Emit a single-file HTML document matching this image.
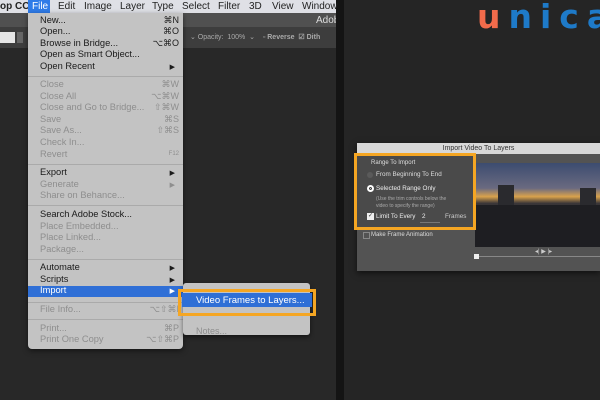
<!DOCTYPE html>
<html><head><meta charset="utf-8"><style>
*{margin:0;padding:0;box-sizing:border-box}
body{width:600px;height:400px;overflow:hidden;background:#252525;position:relative;font-family:"Liberation Sans",sans-serif}
.a{position:absolute}
.mb{left:0;top:0;width:336px;height:13px;background:#dfe0e6;font-size:10px;color:#222;white-space:nowrap}
.mb span{position:absolute;top:1px}
.menu{left:28px;top:13px;width:155px;height:336px;background:#c3c3c3;border-radius:0 0 4px 4px;box-shadow:0 2px 6px rgba(0,0,0,.5)}
.it{position:absolute;left:12px;font-size:9.3px;color:#1a1a1a;white-space:nowrap}
.d{color:#8e8e8e}
.sc{position:absolute;right:4px;font-size:9px;color:#1a1a1a}
.sc.d{color:#8e8e8e}
.sep{position:absolute;left:0;width:155px;height:1px;background:#aaa}
.ar{position:absolute;right:8px;font-size:7px;color:#1a1a1a}
</style></head><body>
<div class="a" style="left:0;top:13px;width:336px;height:14px;background:#505050"></div>
<div class="a" style="left:316px;top:15px;color:#ddd;font-size:10px">Adob</div>
<div class="a" style="left:0;top:27px;width:336px;height:21px;background:#3d3d3d"></div>
<div class="a" style="left:0;top:32px;width:15px;height:11px;background:#e6e6e6"></div>
<div class="a" style="left:17px;top:32px;width:6px;height:11px;background:#666"></div>
<div class="a" style="left:190px;top:33px;font-size:7px;color:#aaa;white-space:nowrap">⌄ Opacity:&nbsp; 100% &nbsp;⌄ &nbsp;&nbsp;&nbsp;▫ <b>Reverse</b> &nbsp;<b>☑ Dith</b></div>
<div class="a" style="left:0;top:48px;width:336px;height:352px;background:#282828"></div>
<div class="a" style="left:336px;top:0;width:8px;height:400px;background:#141414"></div>
<div class="a mb">
<span style="left:0;font-weight:bold">op CC</span>
<span style="left:28px;top:0;width:22px;height:13px;background:#2f7be8;color:#fff;padding:1px 0 0 4px">File</span>
<span style="left:58px">Edit</span><span style="left:84px">Image</span><span style="left:120px">Layer</span><span style="left:152px">Type</span><span style="left:182px">Select</span><span style="left:218px">Filter</span><span style="left:249px">3D</span><span style="left:272px">View</span><span style="left:302px">Window</span>
</div>
<div class="a menu">
<div class="it" style="top:2px">New...</div><div class="sc" style="top:2px">⌘N</div>
<div class="it" style="top:13px">Open...</div><div class="sc" style="top:13px">⌘O</div>
<div class="it" style="top:25px">Browse in Bridge...</div><div class="sc" style="top:25px">⌥⌘O</div>
<div class="it" style="top:36px">Open as Smart Object...</div>
<div class="it" style="top:48px">Open Recent</div><div class="ar" style="top:50px">▶</div>
<div class="sep" style="top:63px"></div>
<div class="it d" style="top:66px">Close</div><div class="sc d" style="top:66px">⌘W</div>
<div class="it d" style="top:78px">Close All</div><div class="sc d" style="top:78px">⌥⌘W</div>
<div class="it d" style="top:89px">Close and Go to Bridge...</div><div class="sc d" style="top:89px">⇧⌘W</div>
<div class="it d" style="top:101px">Save</div><div class="sc d" style="top:101px">⌘S</div>
<div class="it d" style="top:112px">Save As...</div><div class="sc d" style="top:112px">⇧⌘S</div>
<div class="it d" style="top:124px">Check In...</div>
<div class="it d" style="top:136px">Revert</div><div class="sc d" style="top:138px;font-size:6px">F12</div>
<div class="sep" style="top:151px"></div>
<div class="it" style="top:154px">Export</div><div class="ar" style="top:156px">▶</div>
<div class="it d" style="top:166px">Generate</div><div class="ar d" style="top:168px;color:#8e8e8e">▶</div>
<div class="it d" style="top:177px">Share on Behance...</div>
<div class="sep" style="top:192px"></div>
<div class="it" style="top:196px">Search Adobe Stock...</div>
<div class="it d" style="top:208px">Place Embedded...</div>
<div class="it d" style="top:219px">Place Linked...</div>
<div class="it d" style="top:231px">Package...</div>
<div class="sep" style="top:246px"></div>
<div class="it" style="top:249px">Automate</div><div class="ar" style="top:251px">▶</div>
<div class="it" style="top:261px">Scripts</div><div class="ar" style="top:263px">▶</div>
<div class="a" style="left:0;top:273px;width:155px;height:11px;background:#2f6fd6"></div>
<div class="it" style="top:272px;color:#fff">Import</div><div class="ar" style="top:274px;color:#fff">▶</div>
<div class="sep" style="top:289px"></div>
<div class="it d" style="top:291px">File Info...</div><div class="sc d" style="top:291px">⌥⇧⌘I</div>
<div class="sep" style="top:306px"></div>
<div class="it d" style="top:310px">Print...</div><div class="sc d" style="top:310px">⌘P</div>
<div class="it d" style="top:321px">Print One Copy</div><div class="sc d" style="top:321px">⌥⇧⌘P</div>
</div>
<div class="a" style="left:183px;top:283px;width:127px;height:52px;background:#c3c3c3;border-radius:3px;box-shadow:0 2px 5px rgba(0,0,0,.5)"></div>
<div class="a" style="left:196px;top:326px;font-size:9px;color:#8e8e8e">Notes...</div>
<div class="a" style="left:178px;top:289px;width:138px;height:27px;border:3px solid #f5a623"></div>
<div class="a" style="left:182px;top:293px;width:130px;height:14px;background:#2f6fd6"></div>
<div class="a" style="left:196px;top:295px;font-size:9.5px;color:#fff;white-space:nowrap">Video Frames to Layers...</div>
<div class="a" style="left:357px;top:143px;width:243px;height:128px;background:#535353;box-shadow:0 2px 6px rgba(0,0,0,.6)"></div>
<div class="a" style="left:357px;top:143px;width:243px;height:11px;background:#d8d8d8;font-size:7px;color:#333;text-align:center;line-height:11px">Import Video To Layers</div>
<div class="a" style="left:475px;top:163px;width:125px;height:84px;background:linear-gradient(#3c4c70 0%,#6a6a80 30%,#d9a24c 40%,#3a3638 48%,#1c1c20 100%)"></div>
<div class="a" style="left:498px;top:185px;width:16px;height:25px;background:#2a2a2e"></div>
<div class="a" style="left:580px;top:188px;width:16px;height:25px;background:#2a2a2e"></div>
<div class="a" style="left:475px;top:205px;width:125px;height:42px;background:#1e1e22"></div>
<div class="a" style="left:535px;top:248px;font-size:6px;color:#ccc">◂| ▶ |▸</div>
<div class="a" style="left:476px;top:256px;width:124px;height:1px;background:#888"></div>
<div class="a" style="left:474px;top:254px;width:5px;height:5px;background:#eee"></div>
<div class="a" style="left:363px;top:232px;width:7px;height:7px;border:1px solid #888"></div>
<div class="a" style="left:371px;top:232px;font-size:6px;color:#ddd">Make Frame Animation</div>
<div class="a" style="left:354px;top:153px;width:122px;height:77px;border:3px solid #f5a623;background:#4a4a4a"></div>
<div class="a" style="left:371px;top:160px;font-size:6px;color:#ddd">Range To Import</div>
<div class="a" style="left:367px;top:172px;width:6px;height:6px;border-radius:50%;background:#5a5a5a"></div>
<div class="a" style="left:376px;top:171px;font-size:6.3px;color:#ddd">From Beginning To End</div>
<div class="a" style="left:367px;top:185px;width:7px;height:7px;border-radius:50%;background:#eee;border:2px solid #fff;box-shadow:inset 0 0 0 1px #333"></div>
<div class="a" style="left:376px;top:185px;font-size:6.3px;color:#eee">Selected Range Only</div>
<div class="a" style="left:376px;top:196px;font-size:5px;color:#aaa;line-height:7px">(Use the trim controls below the<br>video to specify the range)</div>
<div class="a" style="left:367px;top:213px;width:7px;height:7px;background:#eee;font-size:6px;line-height:7px;color:#333;text-align:center">✓</div>
<div class="a" style="left:376px;top:213px;font-size:6.3px;color:#eee">Limit To Every</div>
<div class="a" style="left:422px;top:213px;font-size:6.3px;color:#eee">2</div>
<div class="a" style="left:420px;top:222px;width:20px;height:1px;background:#777"></div>
<div class="a" style="left:445px;top:213px;font-size:6.3px;color:#ccc">Frames</div>
<div class="a" style="left:477px;top:-3px;font-size:33px;font-weight:bold;letter-spacing:8px;font-family:'DejaVu Sans',sans-serif;white-space:nowrap"><span style="color:#f26b4b">u</span><span style="color:#1e7ac8">nica</span></div>
</body></html>
